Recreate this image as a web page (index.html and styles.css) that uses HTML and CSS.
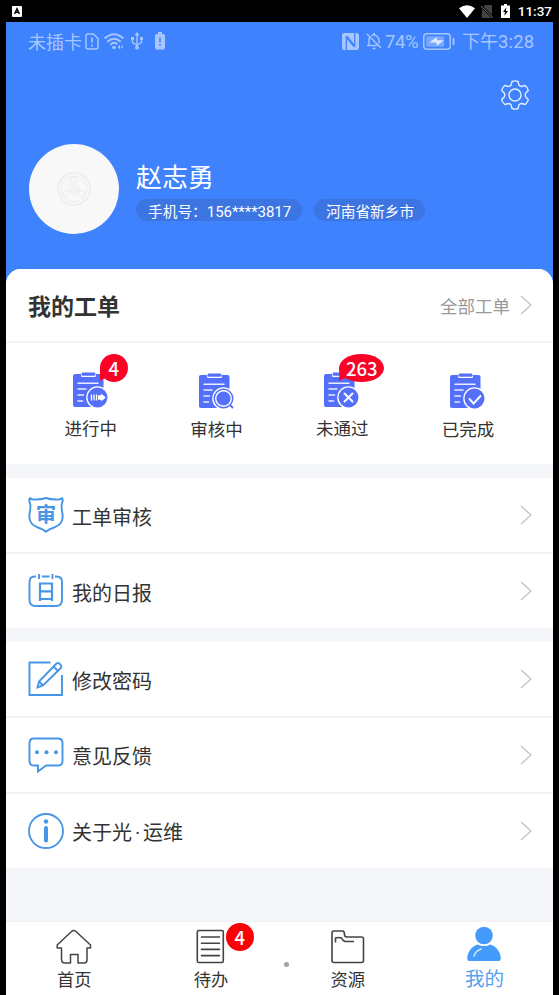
FILE: index.html
```html
<!DOCTYPE html>
<html lang="zh-CN">
<head>
<meta charset="utf-8">
<title>我的</title>
<link rel="stylesheet" href="styles.css">
</head>
<body>
<svg class="defs" width="0" height="0">
  <symbol id="clip" viewBox="0 0 36 36">
    <path fill="#5470fa" d="M2 2h6v1.500q0 1.500 1.500 1.500h12q1.500 0 1.500-1.500V2h5.500q2 0 2 2v14a10 10 0 0 0-12 17H2q-2 0-2-2V4q0-2 2-2z"/>
    <rect x="8.500" y="0.500" width="14" height="3.300" rx="1.400" fill="#5470fa"/>
    <path stroke="#e9edff" stroke-width="1.500" stroke-linecap="round" d="M5 11.300h20M5 17h8M5 23h5.500M5 29h4.500"/>
    <circle cx="24.500" cy="25.500" r="11.300" fill="#fff"/>
    <circle cx="24.500" cy="25.500" r="10" fill="#5470fa"/>
  </symbol>
  <symbol id="chev" viewBox="0 0 12 20"><path d="M1 1l10 9-10 9" fill="none" stroke="#c6c6c9" stroke-width="1.500"/></symbol>
</svg>

<div class="sysbar">
  <svg class="sys-a" width="10" height="11" viewBox="0 0 10 11"><rect width="10" height="11" rx="1" fill="#fff"/><path d="M2.600 8L5 2.700 7.400 8M3.500 6.300h3" fill="none" stroke="#000" stroke-width="1.400"/></svg>
  <div class="sys-right">
    <svg width="16" height="13" viewBox="0 0 16 13"><path fill="#fff" d="M0 3.200Q8-2.800 16 3.200L8 13z"/></svg>
    <svg class="sys-sim" width="12" height="13" viewBox="0 0 12 13"><path fill="#444" d="M4 0h7v13H1V3z"/><path d="M0 1l12 11.500" stroke="#000" stroke-width="2.500"/><path d="M0 1l12 11.500" stroke="#777" stroke-width="1"/></svg>
    <svg class="sys-bat" width="9" height="14" viewBox="0 0 9 14"><path fill="#fff" d="M3 0h3v1.500h3V14H0V1.500h3z"/><path d="M5.400 3.200L2 8h2l-.6 3.800L7 7H4.800z"/></svg>
    <span>11:37</span>
  </div>
</div>

<div class="app">
  <header class="hero">
    <div class="phonebar">
      <span class="carrier">未插卡</span>
      <svg class="p-sim" width="14" height="17" viewBox="0 0 14 17"><path d="M2.500 1h6L13 5.500V14q0 2-2 2H3q-2 0-2-2V2.500Q1 1 2.500 1z" fill="none" stroke="#a7c6ff" stroke-width="1.500"/><path d="M7 4.500v5M7 11.500v2" stroke="#a7c6ff" stroke-width="1.700"/></svg>
      <svg class="p-wifi" width="20" height="17" viewBox="0 0 20 17"><g fill="none" stroke="#a7c6ff" stroke-width="1.900"><path d="M.6 5.500Q10-3 19.400 5.500M3.300 8.800Q10 2.500 16.700 8.800M6.300 11.800Q10 8 13.500 11.300"/></g><circle cx="10" cy="14.500" r="1.800" fill="#a7c6ff"/><path d="M16 11.500v5l-2.200-2.500zM17.500 12l1.800 2-1.800 2z" fill="#a7c6ff"/></svg>
      <svg class="p-usb" width="12" height="18" viewBox="0 0 12 18"><path d="M6 2v13M1.500 6v4.500L6 13l4.500-2.500V6" fill="none" stroke="#a7c6ff" stroke-width="1.400"/><path fill="#a7c6ff" d="M6 0l2.500 3.500h-5zM0 5h3v3H0zM9 5h3v3H9z"/><circle cx="6" cy="15.500" r="2" fill="#a7c6ff"/></svg>
      <svg class="p-batt" width="10" height="18" viewBox="0 0 10 18"><path fill="#a7c6ff" d="M3 0h4v2h1.500Q10 2 10 3.500v12q0 2-2 2H2q-2 0-2-2v-12Q0 2 1.500 2H3z"/><path d="M5 5.500v5M5 12v2" stroke="#3f82fe" stroke-width="1.500"/></svg>
      <div class="phone-right">
        <svg width="17" height="17" viewBox="0 0 17 17"><rect width="17" height="17" rx="2.500" fill="#a7c6ff"/><path d="M4.300 17V4L12 13.500M5 3.500L12.700 13V0" fill="none" stroke="#3f82fe" stroke-width="1.300"/></svg>
        <svg class="p-bell" width="16" height="17" viewBox="0 0 16 17"><path d="M1 1l14 14M3 12.500h8M3 12.500V7q0-1.500.8-2.500M5.500 3Q8 1 10.500 3T13 7v3.500M7 .5h2M6.500 15.500h3M1 12.500h3" fill="none" stroke="#a7c6ff" stroke-width="1.500"/></svg>
        <span class="pct">74%</span>
        <svg class="p-charge" width="32" height="17" viewBox="0 0 32 17"><rect x=".8" y=".8" width="26.400" height="15.400" rx="3" fill="none" stroke="#a7c6ff" stroke-width="1.500"/><rect x="3.200" y="3.200" width="18" height="10.600" rx="1" fill="#78a7ff"/><path d="M30.500 5v7" stroke="#a7c6ff" stroke-width="1.800"/><path fill="#e0ebff" d="M6 9.500L14 4v3.300h7L13.500 13V9.500z"/></svg>
        <span class="time">下午<span>3:28</span></span>
      </div>
    </div>
    <div class="gear-row">
      <svg width="28" height="30" viewBox="0 0 28 30"><path d="M11 1.500Q14 .3 17 1.500L18 5.200Q19 6.300 20.500 6.500L24.200 5.500Q26.800 7.500 27.300 10.500L24.600 13.300Q24 15 24.600 16.700L27.300 19.500Q26.800 22.500 24.200 24.500L20.500 23.500Q19 23.700 18 24.800L17 28.500Q14 29.700 11 28.500L10 24.800Q9 23.700 7.500 23.500L3.800 24.500Q1.200 22.500 .7 19.500L3.400 16.700Q4 15 3.400 13.300L.7 10.500Q1.200 7.500 3.800 5.500L7.500 6.500Q9 6.300 10 5.200Z" fill="none" stroke="#e4eeff" stroke-width="1.400" stroke-linejoin="round"/><circle cx="14" cy="15" r="6" fill="none" stroke="#e4eeff" stroke-width="1.400"/></svg>
    </div>
    <div class="profile">
      <div class="avatar">
        <svg width="34" height="34" viewBox="0 0 34 34" fill="none" stroke="#ececec"><circle cx="17" cy="17" r="16" stroke-width="1.500"/><circle cx="17" cy="17" r="13"/><circle cx="17" cy="17" r="5"/><circle cx="17" cy="8" r="3"/><circle cx="9" cy="21.500" r="3"/><circle cx="25" cy="21.500" r="3"/><path d="M17 14l3 5h-6z"/></svg>
      </div>
      <div class="who">
        <div class="name">赵志勇</div>
        <div class="pills"><span class="pill pill-phone">手机号：<span class="num">156****3817</span></span><span class="pill">河南省新乡市</span></div>
      </div>
    </div>
  </header>

  <main>
    <section class="orders">
      <div class="orders-head"><h1>我的工单</h1><span class="all">全部工单</span><svg class="chev"><use href="#chev"/></svg></div>
      <div class="stats">
        <div class="stat">
          <div class="stat-icon"><svg width="36" height="36"><use href="#clip"/><path d="M18.500 22.500v6M21 22.500v6M23.500 22.500v6" stroke="#fff" stroke-width="1.300"/><path fill="#fff" d="M25 23.200h3.200V21.500l4.600 4-4.600 4v-1.700H25z"/></svg><b class="badge">4</b></div>
          <span>进行中</span>
        </div>
        <div class="stat low">
          <div class="stat-icon"><svg width="36" height="36"><use href="#clip"/><circle cx="24.500" cy="25.500" r="7.800" fill="none" stroke="#fff" stroke-width="1.400"/><path d="M31 32l3 3" stroke="#5470fa" stroke-width="2"/></svg></div>
          <span>审核中</span>
        </div>
        <div class="stat">
          <div class="stat-icon"><svg width="36" height="36"><use href="#clip"/><path d="M20.500 21.500l8 8M28.500 21.500l-8 8" stroke="#fff" stroke-width="1.900" stroke-linecap="round"/></svg><b class="badge wide">263</b></div>
          <span>未通过</span>
        </div>
        <div class="stat low">
          <div class="stat-icon"><svg width="36" height="36"><use href="#clip"/><path d="M19.500 26l4 4.500 7-7.500" fill="none" stroke="#fff" stroke-width="1.900" stroke-linecap="round"/></svg></div>
          <span>已完成</span>
        </div>
      </div>
    </section>

    <section class="menu">
      <div class="row">
        <svg class="ico" viewBox="0 0 36 36" fill="none" stroke="#4795e6" stroke-width="1.900"><path d="M2 1.200Q4 3 8 2.500Q14 2.500 18 1Q22 2.500 28 2.500Q32 3 34 1.200Q35.500 3 34 6Q33 10 34.500 17Q36 27 26 30.500Q21 32 18 34.800Q15 32 10 30.500Q0 27 1.500 17Q3 10 2 6Q.5 3 2 1.200z"/><text class="glyph" x="18" y="25">审</text></svg>
        <span>工单审核</span><svg class="chev"><use href="#chev"/></svg>
      </div>
      <div class="row">
        <svg class="ico" viewBox="0 0 36 36" fill="none" stroke="#4795e6" stroke-width="1.900"><path d="M8 3.500H7Q1.500 3.500 1.500 9v18q0 6 6 6h20.500q6 0 6-6V9Q34 3.500 28.500 3.500H27M14 3.500h7.500M11 1v5M24.500 1v5"/><path stroke-width="2.200" d="M12 28V10.500h12V28M12 18.300H24M12 26H24"/></svg>
        <span>我的日报</span><svg class="chev"><use href="#chev"/></svg>
      </div>
    </section>

    <section class="menu">
      <div class="row">
        <svg class="ico" viewBox="0 0 36 36" fill="none" stroke="#4795e6" stroke-width="1.900"><path d="M22.500 1.500H1.500v32.500H34V14"/><path d="M9.500 26.500l1.500-6L28.500 2.500q1.500-1 3 .3l1.500 1.500q1 1.300-.2 2.700L15 24.500zM25.500 5.500l4.500 4.500M11 20.500l4 4"/></svg>
        <span>修改密码</span><svg class="chev"><use href="#chev"/></svg>
      </div>
      <div class="row">
        <svg class="ico" viewBox="0 0 36 36" fill="none" stroke="#4795e6" stroke-width="1.900"><path d="M6 1.500h24q4.500 0 4.500 4.500v18q0 4.500-4.500 4.500H18l-8 6v-6H6q-4.500 0-4.500-4.500V6Q1.500 1.500 6 1.500z"/><g fill="#4795e6" stroke="none"><circle cx="9" cy="15.300" r="2"/><circle cx="18.500" cy="15.300" r="2"/><circle cx="28" cy="15.300" r="2"/></g></svg>
        <span>意见反馈</span><svg class="chev"><use href="#chev"/></svg>
      </div>
      <div class="row">
        <svg class="ico" viewBox="0 0 36 36" fill="none" stroke="#4795e6" stroke-width="1.800"><circle cx="18" cy="18" r="17"/><circle cx="18" cy="8.500" r="2.200" fill="#4795e6" stroke="none"/><path stroke-width="4" stroke-linecap="round" d="M18 15v12.500"/></svg>
        <span>关于光<i>·</i>运维</span><svg class="chev"><use href="#chev"/></svg>
      </div>
    </section>
  </main>

  <nav class="tabs">
    <div class="tab">
      <svg width="36" height="36" viewBox="0 0 36 36" fill="none" stroke="#444" stroke-width="1.500"><path d="M15.500 2.500q2-2 4.500 0L34.500 16v3H31v12q0 3-3 3h-6v-8.500h-7.500V34H9q-3.500 0-3.500-3.500V19H1.200v-3z" stroke-linejoin="round"/></svg>
      <span>首页</span>
    </div>
    <div class="tab">
      <svg width="36" height="36" viewBox="0 0 36 36" fill="none" stroke="#444" stroke-width="1.600"><rect x="4.300" y="1.500" width="26" height="32" rx="1.500"/><path stroke-linecap="round" d="M8.500 8h18M8.500 14.200h18M8.500 20.400h18M8.500 26.600h18"/></svg>
      <span>待办</span><b class="tab-badge">4</b>
    </div>
    <div class="tab">
      <svg width="36" height="36" viewBox="0 0 36 36" fill="none" stroke="#444" stroke-width="1.600" stroke-linejoin="round"><path d="M4 2h8.500q2 0 2 3.500Q14.500 8 17 8h14.500q2 0 2 2v21.500q0 2-2 2H4q-2 0-2-2V4q0-2 2-2z"/><path d="M5.500 13.500V9q3.500-1 6 0 1 2.500 3.500 3.500H24"/></svg>
      <span>资源</span>
    </div>
    <div class="tab on">
      <svg width="36" height="36" viewBox="0 0 36 36"><circle cx="17" cy="6.500" r="8.800" fill="#459bfb"/><path fill="#459bfb" d="M10.500 15.500q6.500 3 13 0Q32.500 18.500 33.800 28.500q.2 3.500-2.500 3.500H2.700Q0 32 .2 28.500 1.500 18.500 10.500 15.500z"/><path d="M7 27q1.500-5 7-7" fill="none" stroke="#d9eaff" stroke-width="1.500" stroke-linecap="round"/></svg>
      <span>我的</span>
    </div>
    <i class="touch"></i>
  </nav>
</div>
</body>
</html>
```

FILE: styles.css
```css
* { box-sizing: border-box; }
body {
  margin: 0;
  height: 995px;
  overflow: hidden;
  background: #000;
  color: #333;
  font-family: "Noto Sans CJK SC", sans-serif;
}
svg { display: block; flex: none; }
.defs { position: absolute; }

.sysbar {
  height: 22px;
  padding: 0 7px 0 12px;
  display: flex;
  justify-content: space-between;
  align-items: center;
  color: #fff;
  font: 500 13.5px/22px Roboto, sans-serif;
}
.sys-right { display: flex; align-items: center; }
.sys-sim { margin-left: 6px; }
.sys-bat { margin: 0 8px 0 8px; }

.app {
  width: 547px;
  height: 973px;
  margin-left: 6px;
  display: flex;
  flex-direction: column;
  background: #3f82fe;
}
.hero { height: 247px; flex: none; color: #fff; }
.phonebar {
  height: 38px;
  padding: 0 18px 0 22px;
  display: flex;
  align-items: center;
  color: #a7c6ff;
  font-size: 18px;
  line-height: 38px;
}
.p-sim { margin-left: 3px; }
.p-wifi { margin-left: 5px; }
.p-usb { margin-left: 7px; }
.p-batt { margin-left: 12px; }
.phone-right { margin-left: auto; display: flex; align-items: center; }
.p-bell { margin-left: 7px; }
.pct { width: 35px; margin-left: 3px; padding-top: 1px; font-family: Roboto, sans-serif; font-size: 18.500px; letter-spacing: -.4px; }
.p-charge { margin: 0 7px 0 3px; }
.time { width: 73px; white-space: nowrap; }
.time span { font-family: Roboto, sans-serif; font-size: 18.500px; letter-spacing: .2px; }

.gear-row { height: 62px; padding: 20px 24px 0 0; display: flex; justify-content: flex-end; }
.profile { display: flex; padding: 22px 0 0 23px; }
.avatar {
  width: 90px;
  height: 90px;
  border-radius: 50%;
  background: #f8f8f8;
  display: flex;
  align-items: center;
  justify-content: center;
}
.who { margin-left: 17px; padding-top: 14px; }
.name { font-size: 26px; line-height: 36px; }
.pills { display: flex; gap: 12px; margin-top: 5px; }
.pill {
  height: 22px;
  width: 111px;
  padding-left: 12px;
  border-radius: 11px;
  background: #3c74e2;
  font-size: 14.7px;
  line-height: 23px;
  white-space: nowrap;
}
.pill-phone { width: 166px; }
.num { font-family: Roboto, sans-serif; font-size: 15px; letter-spacing: -.05px; }

main {
  flex: 1;
  min-height: 0;
  display: flex;
  flex-direction: column;
  gap: 14px;
  background: #f5f6fa;
  border-radius: 15px 15px 0 0;
  overflow: hidden;
}
.orders { height: 195px; background: #fff; }
.orders-head {
  height: 74px;
  padding: 0 21px 0 22px;
  display: flex;
  align-items: center;
  border-bottom: 2px solid #f3f3f5;
}
h1 { margin: 0; font-size: 23px; line-height: 34px; font-weight: 700; }
.all { margin: 0 10px 0 auto; font-size: 17.500px; color: #999; }
.chev { width: 12px; height: 20px; }
.stats { display: flex; padding: 29px 22px 0; }
.stat { width: 125.700px; display: flex; flex-direction: column; align-items: center; }
.stat.low { padding-top: 1px; }
.stat-icon { position: relative; width: 36px; height: 43px; }
.stat > span { font-size: 17.500px; line-height: 26px; }
.badge {
  position: absolute;
  z-index: 1;
  left: 27px;
  top: -18px;
  width: 28px;
  height: 28px;
  border-radius: 50%;
  background: #fb0327;
  color: #fff;
  font-family: "Noto Sans CJK SC", sans-serif;
  font-size: 18.500px;
  font-weight: 500;
  line-height: 28px;
  text-align: center;
}
.badge::before {
  content: "";
  position: absolute;
  z-index: -1;
  left: 0;
  bottom: 1px;
  width: 14px;
  height: 14px;
  background: #fb0327;
  clip-path: polygon(0 0, 100% 0, 100% 85%, 35% 80%, 0 100%);
}
.badge.wide { left: 15px; width: 45px; }

.menu { background: #fff; }
.row {
  height: 76px;
  padding: 0 21px 0 22px;
  display: flex;
  align-items: center;
  border-bottom: 2px solid #f3f3f5;
  font-size: 20px;
}
.row + .row { height: 75.500px; }
.row:last-child { height: 74px; border-bottom: 0; }
.row .ico { width: 36px; height: 36px; }
.row > span { margin-left: 8px; padding-top: 2px; }
.row i { display: inline-block; width: 11px; text-align: center; font-style: normal; font-family: Roboto, sans-serif; }
.row .chev { margin-left: auto; }
.glyph { font-size: 20.500px; font-weight: 700; fill: #4795e6; stroke: none; text-anchor: middle; }

.tabs {
  position: relative;
  height: 74px;
  flex: none;
  display: flex;
  background: #fff;
  border-top: 1px solid #f0f1f4;
}
.tab {
  position: relative;
  flex: 1;
  display: flex;
  flex-direction: column;
  align-items: center;
  padding-top: 7px;
  font-size: 17.300px;
  line-height: 28px;
}
.tab svg { overflow: visible; }
.tab.on { color: #569ff0; font-size: 19.500px; }
.tab.on span { line-height: 26px; }
.tab-badge {
  position: absolute;
  left: 83px;
  top: 1px;
  width: 28px;
  height: 28px;
  border-radius: 50%;
  background: #fb0006;
  color: #fff;
  font-size: 18.500px;
  line-height: 28px;
  font-weight: 500;
  text-align: center;
}
.touch {
  position: absolute;
  left: 278px;
  top: 40px;
  width: 5px;
  height: 5px;
  border-radius: 50%;
  background: #a2a2a2;
}
```
